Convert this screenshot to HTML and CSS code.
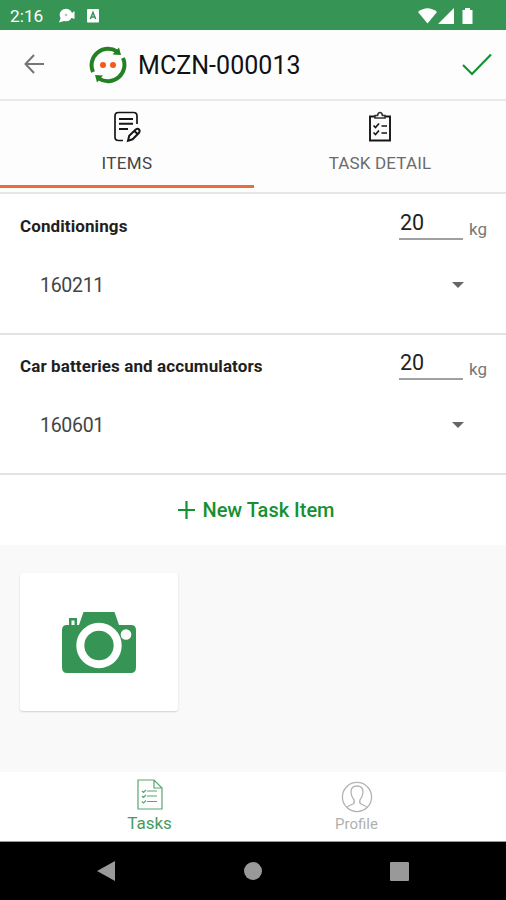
FILE: index.html
```html
<!DOCTYPE html>
<html lang="en">
<head>
<meta charset="utf-8">
<title>MCZN-000013</title>
<link rel="stylesheet" href="styles.css">
</head>
<body>
<div class="screen">
  <div class="status">
    <span class="clock">2:16</span>
    <svg class="notif" width="18" height="16" viewBox="0 0 18 16"><g fill="#fff"><circle cx="8" cy="7" r="6.300"/><path d="M3 9l3 4-5 1.500zM12 5h2l2.500-2v8L14 10h-2z"/></g><circle cx="8" cy="7" r="1.300" fill="#a4cfb0"/></svg>
    <svg class="notif-a" width="12" height="14" viewBox="0 0 12 14"><rect width="12" height="13.500" rx="1" fill="#fff"/><path d="M3.300 10L6 3.500 8.700 10M4.200 8h3.600" fill="none" stroke="#369554" stroke-width="1.500"/></svg>
    <svg class="signals" width="56" height="18" viewBox="0 0 56 18"><g fill="#fff"><path d="M0 5Q9.500-2.500 19 5L9.500 16.500z"/><path d="M20 17L36 1v16z"/><path d="M44.500 3h2.500V1h5v2h2.500v14h-10z"/></g></svg>
  </div>
  <header class="header">
    <svg class="back" width="20" height="20" viewBox="0 0 20 20"><path d="M20 10H1.500M10 1L1.500 10l8.500 9" fill="none" stroke="#757575" stroke-width="2"/></svg>
    <svg class="logo" width="38" height="38" viewBox="0 0 38 38"><g fill="none" stroke="#238023" stroke-width="4"><path d="M4 26A16.500 16.500 0 0 1 28 5.400"/><path d="M34 12A16.500 16.500 0 0 1 10 32.600"/></g><path d="M30 1.500l2 7.500-8.500-.5zM6 29l8 .5L8 36.500z" fill="#238023"/><circle cx="14" cy="19" r="3" fill="#f45b1b"/><circle cx="24" cy="19" r="3" fill="#f45b1b"/></svg>
    <h1 class="title">MCZN-000013</h1>
    <svg class="check" width="30" height="23" viewBox="0 0 30 23"><path d="M1 12l9 9L29 1.500" fill="none" stroke="#169132" stroke-width="2.200"/></svg>
  </header>
  <nav class="tabs">
    <div class="tab tab-active">
      <svg width="30" height="32" viewBox="0 0 30 32"><g fill="none" stroke="#161616" stroke-width="1.700"><path d="M11 29.500H6.500Q3 29.500 3 26V5Q3 1.500 6.500 1.500h15Q25 1.500 25 5v8"/><path d="M7 8h14M7 12.800h14M7 18h9" stroke-width="1.900"/><path d="M16 29.800l1.200-5 6.500-6.300q2-1.500 3.300 0t0 3.300l-6.400 6.500zM22.500 20l3 3" stroke-width="2"/></g></svg>
      <span>ITEMS</span>
    </div>
    <div class="tab">
      <svg width="30" height="32" viewBox="0 0 30 32"><path d="M10 5.500H5v24h20v-24h-5" fill="none" stroke="#161616" stroke-width="1.900"/><path d="M10 7V4.500h2.500Q13 1.500 15 1.500t2.500 3H20V7z" fill="#fff" stroke="#333" stroke-width="1.700"/><path d="M8.500 14.500l2 2 3.500-4M16.500 15H22M8.500 21.500l2 2 3.500-4M16.500 22H22" fill="none" stroke="#161616" stroke-width="1.600"/></svg>
      <span>TASK DETAIL</span>
    </div>
  </nav>
  <main class="main">
    <section class="item">
      <div class="item-top"><span class="name">Conditionings</span><span class="qty">20</span><span class="unit">kg</span></div>
      <div class="select"><span>160211</span><i class="caret"></i></div>
    </section>
    <section class="item item-last">
      <div class="item-top"><span class="name">Car batteries and accumulators</span><span class="qty">20</span><span class="unit">kg</span></div>
      <div class="select"><span>160601</span><i class="caret"></i></div>
    </section>
    <div class="add"><svg width="17" height="18" viewBox="0 0 17 18"><path d="M8.500 0v18M0 9h17" stroke="#169132" stroke-width="2.200"/></svg><span>New Task Item</span></div>
    <div class="photos">
      <div class="photo">
        <svg width="74" height="61" viewBox="0 0 74 61"><path d="M5 13h2V6h8v7h2L21.500 0h31L57 13h12q5 0 5 5v37q0 6-5 6H5q-5 0-5-6V18q0-5 5-5z" fill="#369554"/><path d="M9.500 8.500h3V13h-3z" fill="#fff"/><circle cx="37" cy="33.500" r="18.700" fill="none" stroke="#fff" stroke-width="8"/><circle cx="64" cy="22.500" r="5.300" fill="#fff"/></svg>
      </div>
    </div>
  </main>
  <nav class="bottom">
    <div class="nav-item nav-tasks">
      <svg width="26" height="31" viewBox="0 0 26 31"><g fill="none" stroke="#56a66d" stroke-width="1.200"><path d="M1 1h16l8 8v21H1zM17 1v8h8M10 12h10M10 17h10M10 22.500h10M5 12l1.500 1.500L9 11M5 17l1.500 1.500L9 16M5 22.500L6.500 24 9 21.500"/></g></svg>
      <span>Tasks</span>
    </div>
    <div class="nav-item nav-profile">
      <svg width="32" height="32" viewBox="0 0 32 32"><g fill="none" stroke="#b3b3b3" stroke-width="1.300"><circle cx="16" cy="16" r="14.600"/><path d="M6 26.500q1-1.500 6-3.500 2-1 1-4-3-4-3-8 0-6 6-6t6 6q0 4-3 8-1 3 1 4 5 2 6 3.500"/></g></svg>
      <span>Profile</span>
    </div>
  </nav>
  <div class="system">
    <svg width="18" height="20" viewBox="0 0 18 20"><path d="M18 0v20L0 10z" fill="#999"/></svg>
    <svg width="18" height="18" viewBox="0 0 18 18"><circle cx="9" cy="9" r="9" fill="#999"/></svg>
    <svg width="19" height="19" viewBox="0 0 19 19"><rect width="19" height="19" rx="1" fill="#999"/></svg>
  </div>
</div>
</body>
</html>
```
FILE: styles.css
```css
* { box-sizing: border-box; }
body { margin: 0; font-family: Roboto, "Liberation Sans", sans-serif; background: #fff; }
svg { display: block; flex: none; }
.screen { width: 506px; height: 900px; display: flex; flex-direction: column; overflow: hidden; }
.screen > * { flex: none; }
.status { height: 30px; background: #369554; color: #fff; display: flex; align-items: center; padding: 2px 32px 0 10px; }
.clock { font-size: 17.3px; width: 34px; white-space: nowrap; }
.notif { margin-left: 14px; }
.notif-a { margin-left: 11px; }
.signals { margin-left: auto; }
.header { height: 71px; background: #fdfdfd; border-bottom: 2px solid #e8e8e8; display: flex; align-items: center; padding: 0 14px 0 24px; }
.back { margin-top: -1px; }
.logo { margin-left: 45px; }
.title { margin: 2px 0 0 11px; font-size: 25px; line-height: 30px; font-weight: 400; color: #111; letter-spacing: 0.05px; white-space: nowrap; }
.check { margin-left: auto; }
.tabs { height: 93px; display: grid; grid-template-columns: 254px 252px; background: #fdfdfd; border-bottom: 2px solid #e6e6e6; }
.tab { height: 87px; padding-top: 10px; display: flex; flex-direction: column; align-items: center; gap: 10px; font-size: 17px; line-height: 20px; letter-spacing: 0.15px; color: #6b6b6b; }
.tab-active { color: #444; letter-spacing: 0.4px; border-bottom: 3px solid #ec6d3c; }
.item { height: 141px; border-bottom: 2px solid #e2e2e2; padding: 13px 19px 0 20px; }
.item-last { height: 140px; padding-top: 12px; }
.item-top { height: 34px; display: flex; }
.name { flex: 1; padding: 9px 0 0; font-size: 17px; line-height: 20px; font-weight: 700; color: #1f1f1f; letter-spacing: 0.1px; }
.qty { width: 64px; height: 33px; border-bottom: 2px solid #a0a0a0; padding-left: 1px; font-size: 21.5px; line-height: 32px; color: #222; }
.unit { width: 18px; margin-left: 6px; padding-top: 12px; font-size: 17px; line-height: 20px; color: #777; white-space: nowrap; }
.select { margin-top: 32px; padding: 0 23px 0 20px; display: flex; align-items: center; justify-content: space-between; font-size: 19.5px; line-height: 26px; letter-spacing: -0.3px; color: #444; }
.caret { margin-bottom: 2px; border: 6px solid transparent; border-top-color: #666; border-bottom: 0; }
.add { height: 70px; display: flex; align-items: center; justify-content: center; gap: 7px; padding-left: 7px; font-size: 20px; font-weight: 500; color: #169132; }
.photos { height: 227px; background: #f9f9f9; padding: 28px 20px; }
.photo { width: 158px; height: 138px; display: flex; align-items: center; justify-content: center; background: #fff; border-radius: 3px; box-shadow: 0 1px 2px rgba(0, 0, 0, 0.16); }
.bottom { height: 70px; background: #fff; border-bottom: 1px solid #999; display: grid; grid-template-columns: 207px 207px; justify-content: center; }
.nav-item { display: flex; flex-direction: column; align-items: center; }
.nav-tasks { padding-top: 7px; gap: 3px; color: #459b5f; font-size: 17px; line-height: 20px; }
.nav-profile { padding-top: 9px; gap: 1px; color: #b0b0b0; font-size: 15px; line-height: 20px; }
.system { height: 58px; background: #000; display: flex; align-items: center; justify-content: space-between; padding: 0 97px; }
```
